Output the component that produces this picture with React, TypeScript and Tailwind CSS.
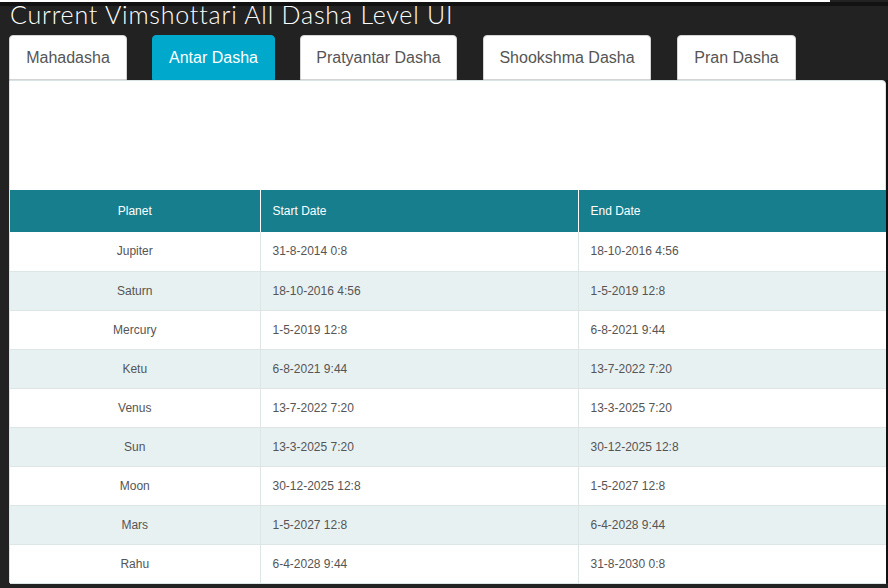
import React, { useState } from 'react';

const tabs = [
  { label: 'Mahadasha', w: 'w-[118px] ml-[9px]' },
  { label: 'Antar Dasha', w: 'w-[123px] ml-[25px]' },
  { label: 'Pratyantar Dasha', w: 'w-[157px] ml-[25px]' },
  { label: 'Shookshma Dasha', w: 'w-[168px] ml-[26px]' },
  { label: 'Pran Dasha', w: 'w-[119px] ml-[26px]' },
];

const rows = [
  ['Jupiter', '31-8-2014 0:8', '18-10-2016 4:56'],
  ['Saturn', '18-10-2016 4:56', '1-5-2019 12:8'],
  ['Mercury', '1-5-2019 12:8', '6-8-2021 9:44'],
  ['Ketu', '6-8-2021 9:44', '13-7-2022 7:20'],
  ['Venus', '13-7-2022 7:20', '13-3-2025 7:20'],
  ['Sun', '13-3-2025 7:20', '30-12-2025 12:8'],
  ['Moon', '30-12-2025 12:8', '1-5-2027 12:8'],
  ['Mars', '1-5-2027 12:8', '6-4-2028 9:44'],
  ['Rahu', '6-4-2028 9:44', '31-8-2030 0:8'],
];

const App: React.FC = () => {
  const [active, setActive] = useState(1);

  return (
    <div className="w-[888px] h-[588px] overflow-hidden bg-[#222222] font-['Liberation_Sans',Arial,sans-serif]">
      {/* top strip, sits over the title */}
      <div className="relative z-10 flex">
        <div className="h-[2px] w-[830px] bg-white" />
      </div>
      <div className="relative z-10 h-[4px] w-full bg-[#121212]" />

      <h1 className="relative mt-[-6px] pl-[10px] text-white text-[25px] leading-[28px] font-light tracking-[0.8px] font-['Lato','DejaVu_Sans',sans-serif]">
        Current Vimshottari All Dasha Level UI
      </h1>

      <div className="flex mt-[7px]">
        {tabs.map((t, i) => (
          <button
            key={t.label}
            onClick={() => setActive(i)}
            className={`${t.w} h-[45px] rounded-t-[4px] border text-[16px] ${
              i === active
                ? 'bg-[#00a9cc] border-[#00a9cc] text-white'
                : 'bg-white border-[#d4d4d4] text-[#555555]'
            }`}
          >
            {t.label}
          </button>
        ))}
      </div>

      <div className="flex">
        <div className="ml-[9px] w-[877px] h-[503px] bg-white rounded-tr-[4px] border border-[#d9e2e4] pt-[109px]">
          <table className="w-[876px] border-collapse text-[12px] text-[#555555]">
            <thead>
              <tr className="bg-[#177e8e] text-white h-[42px]">
                <th className="w-[250px] font-normal text-center border-r border-white">Planet</th>
                <th className="w-[318px] font-normal text-left pl-[12px] border-r border-white">Start Date</th>
                <th className="font-normal text-left pl-[12px]">End Date</th>
              </tr>
            </thead>
            <tbody>
              {rows.map((r, i) => (
                <tr
                  key={r[0]}
                  className={`h-[39px] border-b border-[#dde5e7] ${i % 2 === 1 ? 'bg-[#e8f1f2]' : 'bg-white'}`}
                >
                  <td className="text-center border-r border-[#dde5e7]">{r[0]}</td>
                  <td className="pl-[12px] border-r border-[#dde5e7]">{r[1]}</td>
                  <td className="pl-[12px]">{r[2]}</td>
                </tr>
              ))}
            </tbody>
          </table>
        </div>
        <div className="w-[2px] bg-[#111111]" />
      </div>
    </div>
  );
};

export default App;
